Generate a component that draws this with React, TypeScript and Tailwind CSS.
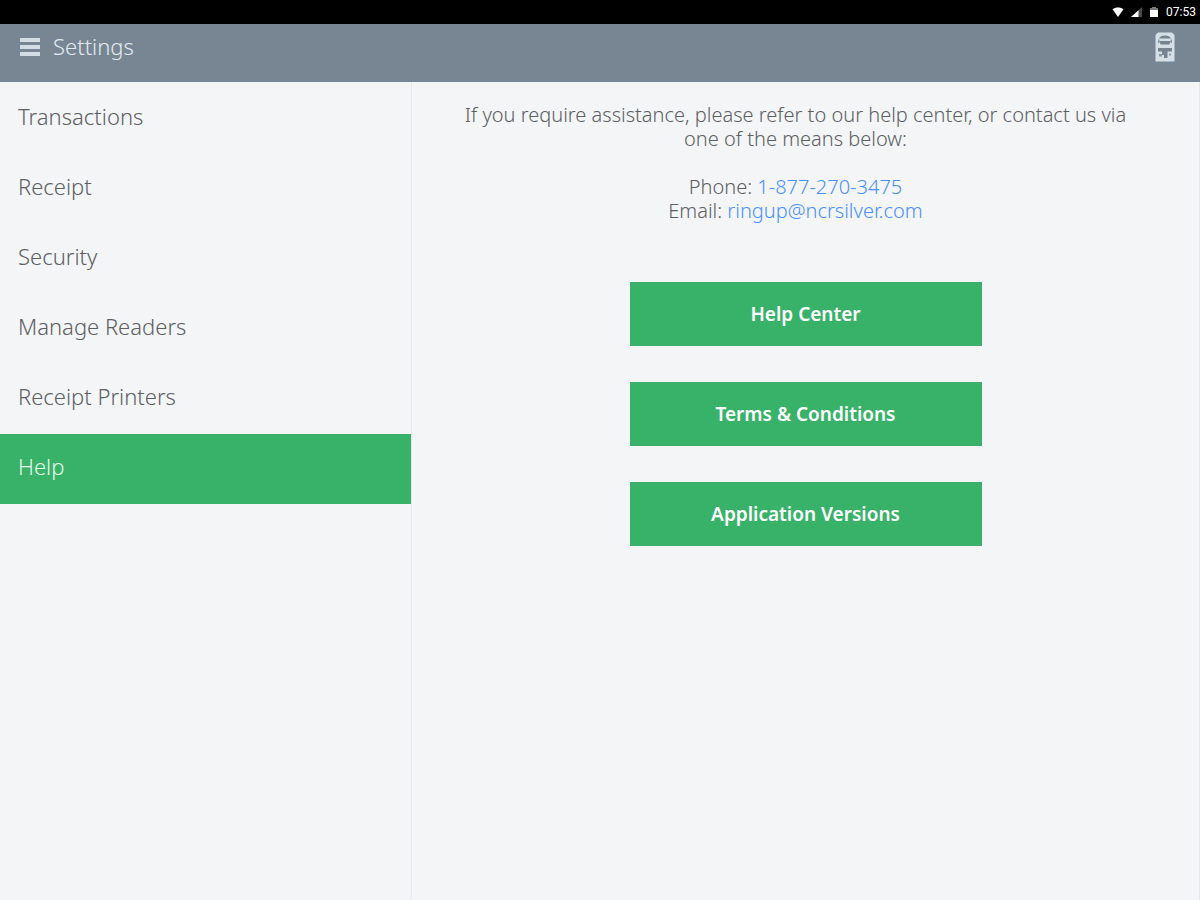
const menuItems = ['Transactions', 'Receipt', 'Security', 'Manage Readers', 'Receipt Printers', 'Help'];

const helpActions = ['Help Center', 'Terms & Conditions', 'Application Versions'];

const activeItem = 'Help';

const StatusBar = () => (
  <div className="h-6 bg-black flex items-center justify-end gap-[6px] text-white">
    <svg viewBox="0 0 12 12" className="w-3 h-3" fill="#ffffff" aria-hidden="true">
      <path d="M0.5 3.2C3.6 0.8 8.4 0.8 11.5 3.2L6 11Z" />
    </svg>
    <svg viewBox="0 0 12 12" className="w-3 h-3" aria-hidden="true">
      <path d="M12 1V11H1Z" fill="#4a4a4a" />
      <path d="M8.5 4.2V11H1Z" fill="#ffffff" />
    </svg>
    <svg viewBox="0 0 12 12" className="w-3 h-3" aria-hidden="true">
      <path d="M2 2H4V1H8V2H10V5H2Z" fill="#777777" />
      <path d="M2 4H10V11H2Z" fill="#ffffff" />
    </svg>
    <span className="pr-1 text-xs font-['Roboto',sans-serif] font-normal">07:53</span>
  </div>
);

const ReaderIcon = () => (
  <svg viewBox="0 0 20 30" className="w-5 h-[30px]" aria-hidden="true">
    <path d="M3 0.5H17L19.5 3V29.5H0.5V3Z" fill="#d5dfe5" />
    {/* card slot */}
    <path d="M4 6.5C5 2.5 15 2.5 16 6.5Z" fill="#75848f" />
    <path d="M3 7.5H4.5V11H3ZM15.5 7.5H17V11H15.5Z" fill="#8998a3" />
    <path d="M4.5 9H15.5L14.5 12.5H5.5Z" fill="#75848f" />
    {/* keypad */}
    <path d="M3 16H17V19.5H12.5V26H9V23H7V19.5H3Z" fill="#75848f" />
    <path d="M4 22H7V24.5H4ZM14 21.5H16V23.5H14Z" fill="#8998a3" />
  </svg>
);

export default function App() {
  return (
    <div className="min-h-screen flex flex-col bg-[#f3f5f7] text-[#5d6063] font-['Noto_Sans',sans-serif] font-light">
      <StatusBar />

      <header className="h-[58px] bg-[#778692] text-[#e3eaef] flex items-start justify-between pl-5 pr-[25px] pt-2">
        <div className="flex items-center gap-[13px]">
          <button aria-label="Open menu" className="flex flex-col gap-[3px] pt-0.5">
            <span className="w-5 h-1 bg-[#d3dce3]" />
            <span className="w-5 h-1 bg-[#d3dce3]" />
            <span className="w-5 h-1 bg-[#d3dce3]" />
          </button>
          <h1 className="text-[22px] leading-7">Settings</h1>
        </div>
        <button aria-label="Card reader">
          <ReaderIcon />
        </button>
      </header>

      <div className="flex flex-1">
        {/* Settings menu */}
        <nav className="w-[412px] shrink-0 border-r border-[#e6e9ec] pt-0.5">
          {menuItems.map((item) => (
            <a
              key={item}
              href="#"
              className={`flex items-center h-[70px] px-[18px] pb-[6px] text-[22px] ${
                item === activeItem ? 'bg-[#38b269] text-[#e6f7ec]' : ''
              }`}
            >
              {item}
            </a>
          ))}
        </nav>

        {/* Help content */}
        <main className="flex-1 border-r border-[#e6e9ec]">
          <div className="pl-10 pr-[60px] pt-[21px] text-center text-xl leading-6">
            <p>If you require assistance, please refer to our help center, or contact us via one of the means below:</p>
            <p className="mt-6">
              Phone: <a href="tel:1-877-270-3475" className="text-[#4a90ff]">1-877-270-3475</a>
              <br />
              Email: <a href="mailto:ringup@ncrsilver.com" className="text-[#4a90ff]">ringup@ncrsilver.com</a>
            </p>
          </div>

          <div className="mt-[59px] flex flex-col items-center gap-9">
            {helpActions.map((action) => (
              <button key={action} className="w-[352px] h-16 bg-[#38b269] text-white text-[19px] font-semibold">
                {action}
              </button>
            ))}
          </div>
        </main>
      </div>
    </div>
  );
}
